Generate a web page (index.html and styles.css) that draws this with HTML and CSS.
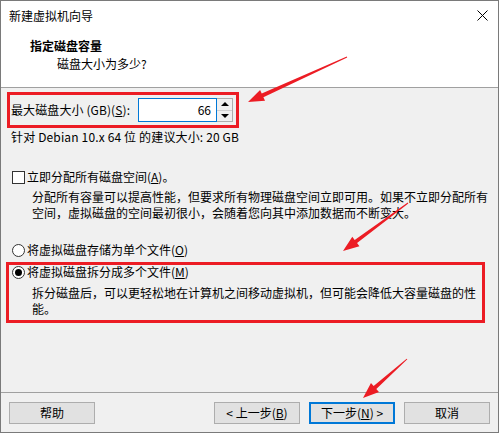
FILE: index.html
```html
<!DOCTYPE html>
<html lang="zh-CN">
<head>
<meta charset="utf-8">
<title>新建虚拟机向导</title>
<link rel="stylesheet" href="styles.css">
</head>
<body>
<div class="window">
  <div class="titlebar">
    <span class="title">新建虚拟机向导</span>
    <svg class="close" width="11" height="11" viewBox="0 0 11 11"><path d="M0.5 0.5 L10.5 10.5 M10.5 0.5 L0.5 10.5" stroke="#000" stroke-width="1"/></svg>
  </div>
  <div class="header">
    <div class="h-title">指定磁盘容量</div>
    <div class="h-sub">磁盘大小为多少?</div>
  </div>
  <div class="content">
    <div class="size-row">
      <span class="size-label">最大磁盘大小 (GB)(<u>S</u>):</span>
      <div class="spin">
        <div class="spin-input">66</div>
        <div class="spin-btns">
          <span class="spin-btn"><span class="tri-up"></span></span>
          <span class="spin-btn"><span class="tri-down"></span></span>
        </div>
      </div>
    </div>
    <div class="hint">针对 Debian 10.x 64 位 的建议大小: 20 GB</div>
    <div class="opt opt-check"><span class="checkbox"></span><span>立即分配所有磁盘空间(<u>A</u>)。</span></div>
    <div class="desc desc-1">分配所有容量可以提高性能，但要求所有物理磁盘空间立即可用。如果不立即分配所有<br>空间，虚拟磁盘的空间最初很小，会随着您向其中添加数据而不断变大。</div>
    <div class="opt opt-radio1"><span class="radio"></span><span>将虚拟磁盘存储为单个文件(<u>O</u>)</span></div>
    <div class="opt opt-radio2"><span class="radio checked"></span><span>将虚拟磁盘拆分成多个文件(<u>M</u>)</span></div>
    <div class="desc desc-2">拆分磁盘后，可以更轻松地在计算机之间移动虚拟机，但可能会降低大容量磁盘的性<br>能。</div>
  </div>
  <div class="footer">
    <button class="btn">帮助</button>
    <div class="btn-group">
      <button class="btn">&lt; 上一步(<u>B</u>)</button>
      <button class="btn btn-default">下一步(<u>N</u>) &gt;</button>
      <button class="btn">取消</button>
    </div>
  </div>
  <svg class="annot" width="499" height="433" viewBox="0 0 499 433">
    <rect x="8.5" y="93.5" width="229" height="33" fill="none" stroke="#ec1c24" stroke-width="3"/>
    <rect x="7.5" y="263.5" width="476" height="58" fill="none" stroke="#ec1c24" stroke-width="3"/>
    <polygon fill="#ec1c24" points="346.79,56.55 261.73,93.56 260.08,89.92 248,102 265.04,100.84 263.39,97.2 347.21,57.45"/>
    <polygon fill="#ec1c24" points="407.70,202.60 354.68,239.89 352.31,236.68 343,251 359.43,246.32 357.06,243.11 408.30,203.40"/>
    <polygon fill="#ec1c24" points="406.67,358.63 373.64,385.89 370.99,382.9 363,398 378.95,391.88 376.3,388.89 407.33,359.37"/>
  </svg>
</div>
</body>
</html>
```

FILE: styles.css
```css
* { box-sizing: border-box; }
html, body { margin: 0; padding: 0; background: #f0f0f0; }
body {
  font-family: "Noto Sans CJK SC", "Microsoft YaHei", sans-serif;
  font-size: 12px;
  color: #000;
}
u { text-decoration: underline; text-underline-offset: 1px; }

.window {
  position: relative;
  width: 499px;
  height: 433px;
  border: 1px solid #7a7a7a;
  background: #f0f0f0;
  display: flex;
  flex-direction: column;
}

.titlebar {
  height: 29px;
  background: #fff;
  display: flex;
  align-items: center;
  justify-content: space-between;
  padding: 0 10px 0 8px;
  line-height: 16px;
}
.close { display: block; margin-top: -1px; }

.header {
  height: 58px;
  background: #fff;
  border-bottom: 1px solid #a0a0a0;
  padding: 8px 0 0 29px;
  line-height: 16px;
}
.h-title { font-weight: bold; }
.h-sub { margin-top: 2px; padding-left: 27px; }

.content {
  flex: 1;
  padding-left: 10px;
  line-height: 16px;
}

.size-row {
  margin-top: 10px;
  display: flex;
  align-items: center;
  height: 24px;
}
.size-label { width: 127px; white-space: nowrap; letter-spacing: 0.1px; }
.spin { display: flex; height: 24px; }
.spin-input {
  width: 79px;
  height: 24px;
  border: 1px solid #0078d7;
  background: #fff;
  text-align: right;
  padding-right: 5px;
  line-height: 22px;
  font-size: 12px;
}
.spin-btns {
  width: 16px;
  height: 24px;
  border: 1px solid #adadad;
  border-left: none;
  background: #f0f0f0;
  display: flex;
  flex-direction: column;
}
.spin-btn {
  flex: 1;
  display: flex;
  align-items: center;
  justify-content: center;
}
.spin-btn + .spin-btn { border-top: 1px solid #d0d0d0; }
.tri-up, .tri-down { width: 0; height: 0; border-left: 4px solid transparent; border-right: 4px solid transparent; }
.tri-up { border-bottom: 4px solid #000; }
.tri-down { border-top: 4px solid #000; }

.hint { margin-top: 7px; white-space: nowrap; letter-spacing: 0.15px; }

.opt {
  display: flex;
  align-items: center;
  height: 16px;
  white-space: nowrap;
}
.opt-check { margin-top: 24px; }
.opt-radio1 { margin-top: 21px; }
.opt-radio2 { margin-top: 6px; }

.checkbox {
  width: 13px;
  height: 13px;
  border: 1px solid #333;
  background: #fff;
  margin: 0 2px 0 1px;
}
.radio {
  width: 13px;
  height: 13px;
  border: 1px solid #333;
  border-radius: 50%;
  background: #fff;
  margin: 0 2px 0 1px;
  display: flex;
  align-items: center;
  justify-content: center;
}
.radio.checked::after {
  content: "";
  width: 7px;
  height: 7px;
  border-radius: 50%;
  background: #000;
}

.desc { padding-left: 21px; white-space: nowrap; line-height: 16px; }
.desc-1 { margin-top: 4px; }
.desc-2 { margin-top: 5px; }

.footer {
  height: 40px;
  border-top: 1px solid #a0a0a0;
  padding: 9px 8px 8px 8px;
  display: flex;
  justify-content: space-between;
}
.btn-group { display: flex; gap: 9px; }
.btn {
  width: 86px;
  height: 22px;
  background: #e1e1e1;
  border: 1px solid #adadad;
  font: inherit;
  font-size: 12px;
  line-height: 18px;
  padding: 0;
  color: #000;
}
.btn-default { border: 2px solid #0078d7; }

.annot { position: absolute; left: -1px; top: -1px; pointer-events: none; }
```
